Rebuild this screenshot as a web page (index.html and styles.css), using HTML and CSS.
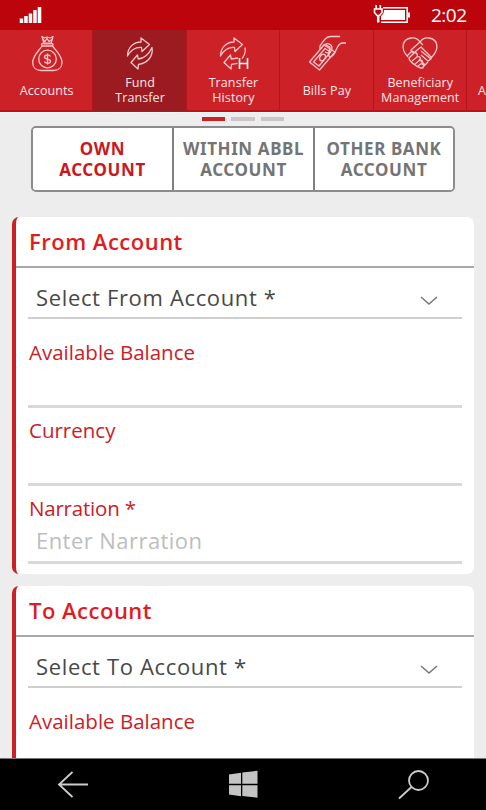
FILE: index.html
```html
<!DOCTYPE html>
<html lang="en">
<head>
<meta charset="utf-8">
<title>Fund Transfer</title>
<link rel="stylesheet" href="styles.css">
</head>
<body>
<div class="phone">
  <header class="status">
    <svg class="signal" width="24" height="18" viewBox="0 0 24 18" fill="#fff"><path d="M.7 12.500h3.500V17H.7zM5.200 10h3.500v7H5.200zM9.700 7.500h3.500V17H9.700zM14.200 4h3.500v13h-3.500zM18.700 1h3.600v16h-3.600z"/></svg>
    <svg class="battery" width="38" height="20" viewBox="0 0 38 20" fill="none" stroke="#fff"><path d="M10 3.800H34.200V18.200H8" stroke-width="1.600"/><path d="M11 6H32V16H8V12Q11 10 11 6Z" fill="#fff" stroke="none"/><path d="M36 8.500v5" stroke-width="2"/><path d="M3.200 1v4M7.300 1v4" stroke-width="1.600"/><path d="M1.500 5h7.500v3.500l-2.500 3h-2.500l-2.500-3z" stroke-width="1.600"/><path d="M5.200 11v7.500" stroke-width="2.500"/></svg>
    <span class="clock">2:02</span>
  </header>
  <nav class="nav">
    <div class="item">
      <svg class="icon" width="40" height="40" viewBox="0 0 40 40"><path d="M15 2.500l2.500 1.500 2.500-1 3 1 3-1.500-2 7h-7zM16 5.500l2 2 2-3 2 3 3-2"/><rect x="14.500" y="9.500" width="11.500" height="2.500" rx="1.200"/><path d="M15 12C11 18 5.700 22 5.700 28.500c0 5 3.500 8 8.300 8h12.500c5 0 8.500-3 8.500-8C35 22 30 18 25.500 12"/><circle cx="20.500" cy="25" r="8.800"/><path d="M23.500 22.500c-1-2.200-6-2-6 .5 0 2.800 6 1.400 6 4.200s-5 2.500-6 .2M20.500 19.500v11"/></svg>
      <span class="label">Accounts</span>
    </div>
    <div class="item active">
      <svg class="icon" width="40" height="40" viewBox="0 0 40 40"><path d="M7.500 22C7.500 13 14 8 21 8V4l8.500 6.500L22 17.500l-.5-4C15 13 11 16 7.500 22zM32 13.500c1.500 9-5 16-13.500 16.800L18 35l-7-6.500 6.500-7.500.7 4C25 24.500 29 20 32 13.500z"/></svg>
      <span class="label">Fund<br>Transfer</span>
    </div>
    <div class="item">
      <svg class="icon" width="40" height="40" viewBox="0 0 40 40"><path d="M7.500 22C7.500 13 14 8 21 8V4l8.500 6.500L22 17.500l-.5-4C15 13 11 16 7.500 22zM32 13.500c.8 4-.5 8-3 11M25 24l-6.800 1-.7-4L11 28.500l7 6.500.5-4.700 6-1"/><path class="stroke-strong" d="M26.500 24v11M34.500 24v11M26.500 29.500h8"/></svg>
      <span class="label">Transfer<br>History</span>
    </div>
    <div class="item">
      <svg class="icon" width="40" height="40" viewBox="0 0 40 40"><path d="M2.500 28L17 11l11 7-15.500 18zM6.500 28L18 14.500l5.500 3.500-11.500 14z"/><ellipse cx="15.500" cy="23.500" rx="2.500" ry="3.500" transform="rotate(35 15.500 23.500)"/><path d="M13 16V12C17 6 19 2.500 24 2.500h9M39 9h-4c-5 1-5 7-8 11-4 5-6 3-5-1M16 12c3-4 9-2.500 9 2 0 4-4 6-7 4M19 11l4 2-1 5"/></svg>
      <span class="label">Bills Pay</span>
    </div>
    <div class="item">
      <svg class="icon" width="40" height="40" viewBox="0 0 40 40"><path d="M8 23C-.5 14 3 5 11 4c4-.5 7 1 9 4 2-3 5-4.500 9-4 8 1 12 10 2 20"/><path d="M7 22l5-5 3 2M20 8l-9 8c0 3 3 3 5 1l5-4 11 11M23 11l-3-3M9 24l5-5c3-1 4 2 3 4 3-1 4 1 3 3 3 0 3 2 2 4 2 0 2 2 1 4-3 1-14-6-14-10zM12 27l5-4M15 30l5-4M18 32l4-3M21 17l10 8-3 2-7-6M28 28l-3 3-6-6M25 31l-3 3"/></svg>
      <span class="label">Beneficiary<br>Management</span>
    </div>
    <div class="item next"><span class="label">A</span></div>
  </nav>
  <main class="page">
    <div class="pager"><i class="on"></i><i></i><i></i></div>
    <div class="segments">
      <button class="on">OWN<br>ACCOUNT</button>
      <button>WITHIN ABBL<br>ACCOUNT</button>
      <button>OTHER BANK<br>ACCOUNT</button>
    </div>
    <section class="card">
      <h2>From Account</h2>
      <div class="fields">
        <div class="select"><span>Select From Account *</span><svg width="18" height="10" viewBox="0 0 18 10"><path d="M1 1l8 7 8-7"/></svg></div>
        <div class="field balance"><span class="name">Available Balance</span></div>
        <div class="field currency"><span class="name">Currency</span></div>
        <div class="field narration"><span class="name">Narration *</span><span class="placeholder">Enter Narration</span></div>
      </div>
    </section>
    <section class="card">
      <h2>To Account</h2>
      <div class="fields">
        <div class="select"><span>Select To Account *</span><svg width="18" height="10" viewBox="0 0 18 10"><path d="M1 1l8 7 8-7"/></svg></div>
        <div class="field balance"><span class="name">Available Balance</span></div>
      </div>
    </section>
  </main>
  <footer class="keys">
    <svg width="32" height="28" viewBox="0 0 32 28"><path d="M31 13.500H2M15.500 1L2 13.500 15.500 26"/></svg>
    <svg class="windows" width="30" height="28" viewBox="0 0 30 28"><path d="M0 3.500l12-1.800v11H0zM13.300 1.500L28.500-.3v13H13.300zM0 14.200h12v11L0 23.500zM13.300 14.200h15.200v12.500L13.300 25z"/></svg>
    <svg width="32" height="30" viewBox="0 0 32 30"><circle cx="20.500" cy="10.500" r="9.500"/><path d="M13.500 17L1 28.500"/></svg>
  </footer>
</div>
</body>
</html>
```

FILE: styles.css
```css
* { box-sizing: border-box; }
body { margin: 0; font-family: "Open Sans", "Noto Sans", sans-serif; }
.phone { width: 486px; height: 810px; display: flex; flex-direction: column; overflow: hidden; background: #ededed; }
.status { flex: none; height: 30px; background: #bb040b; display: flex; align-items: flex-start; color: #fff; }
.signal { margin: 6px 0 0 19px; }
.battery { margin: 4px 0 0 330px; }
.clock { margin-left: 20px; font-size: 19px; line-height: 30px; letter-spacing: -.5px; }
.nav { flex: none; height: 83px; display: flex; border-bottom: 1px solid #fafafa; box-shadow: inset 0 -2px #bd1218; background: #cd2128; overflow: hidden; }
.item { flex: none; width: 93.400px; height: 81px; border-right: 1px solid #b5141a; display: flex; flex-direction: column; align-items: center; color: #f9e7e8; }
.item.active { background: #9b1b20; }
.icon { flex: none; margin: 4px 0 0 1px; fill: none; stroke: #f4c9cb; stroke-width: 1.300; stroke-linejoin: round; }
.stroke-strong { stroke: #fff; stroke-width: 1.600; }
.label { height: 30px; margin: 1px 0 0 1px; display: flex; align-items: center; text-align: center; font-size: 12.500px; line-height: 15px; letter-spacing: .1px; white-space: nowrap; }
.item.next { align-items: flex-start; padding: 44px 0 0 10px; }
.page { flex: 1; min-height: 0; overflow: hidden; padding: 4px 12px 0; }
.pager { height: 4px; display: flex; gap: 6px; justify-content: center; }
.pager i { width: 23.500px; height: 4px; background: #cbc5c6; }
.pager i.on { background: #cc2027; }
.segments { display: grid; grid-template-columns: 141px 141px 1fr; width: 424px; height: 66px; margin: 5px 0 25px 19px; border: 2px solid #8c8c8c; border-radius: 5px; background: #fff; overflow: hidden; }
.segments button { padding: 0; border: 0; border-right: 2px solid #808080; background: #fff; color: #747474; font: bold 17px/21px "Noto Sans", sans-serif; letter-spacing: .6px; white-space: nowrap; }
.segments button:last-child { border-right: 0; }
.segments .on { color: #c91820; }
.card { height: 357px; margin-bottom: 12px; background: #fff; border-left: 4px solid #cc2027; border-radius: 7px; }
.card h2 { height: 51px; margin: 0; padding-left: 13px; border-bottom: 2px solid #a8a8a8; font-size: 22px; font-weight: 600; line-height: 49px; letter-spacing: .5px; color: #e11b22; }
.fields { padding: 0 12px; }
.select { height: 51px; display: flex; justify-content: space-between; padding: 0 24px 0 8px; border-bottom: 2px solid #cfcfcf; font-size: 22px; line-height: 58px; letter-spacing: .65px; color: #484848; }
.select svg { margin-top: 28px; fill: none; stroke: #777; stroke-width: 1.500; }
.field { border-bottom: 3px solid #d9d9d9; display: flex; flex-direction: column; color: #cc2027; font-size: 20.500px; line-height: 30px; }
.balance { height: 89px; padding-top: 18px; }
.currency { height: 78px; padding-top: 7px; }
.narration { height: 78px; padding-top: 7px; }
.name { padding-left: 1px; }
.narration .name { letter-spacing: -.2px; }
.placeholder { padding-left: 8px; color: #bdbdbd; font-size: 22px; line-height: 35px; letter-spacing: .45px; }
.keys { flex: none; height: 52px; background: #000; border-top: 1px solid #777; display: flex; justify-content: space-between; align-items: center; padding: 0 56px 0 57px; }
.keys svg { fill: none; stroke: #ccc; stroke-width: 1.800; overflow: visible; }
.keys .windows { fill: #c4c4c4; stroke: none; }
```
